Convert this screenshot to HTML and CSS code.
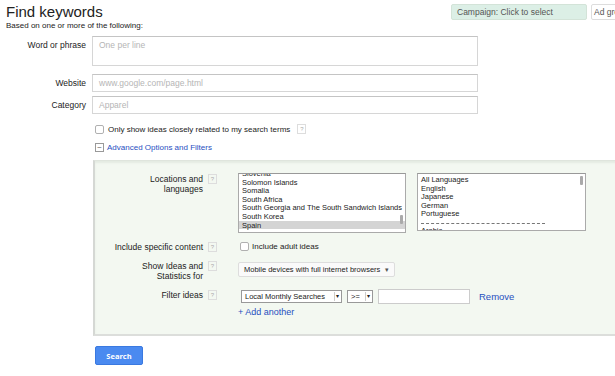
FILE: index.html
```html
<!DOCTYPE html>
<html lang="en">
<head>
  <meta charset="UTF-8">
  <title>Find keywords</title>
  <link rel="stylesheet" href="styles.css">
</head>
<body>
  <div class="page">
    <div class="top">
      <div class="heading">
        <h1>Find keywords</h1>
        <p class="sub">Based on one or more of the following:</p>
      </div>
      <div class="picker">
        <span class="campaign">Campaign: Click to select</span>
        <span class="adgroup">Ad group: Click to select</span>
      </div>
    </div>

    <div class="fields">
      <label class="lbl">Word or phrase</label>
      <div class="box tall">One per line</div>
      <label class="lbl">Website</label>
      <div class="box">www.google.com/page.html</div>
      <label class="lbl">Category</label>
      <div class="box">Apparel</div>
    </div>

    <div class="opt">
      <span class="check"></span>
      <span>Only show ideas closely related to my search terms</span>
      <span class="help">?</span>
    </div>
    <div class="opt adv">
      <span class="minus">&minus;</span>
      <a>Advanced Options and Filters</a>
    </div>

    <div class="panel">
      <div class="row">
        <div class="plabel">Locations and<br>languages</div>
        <div class="hcol"><span class="help">?</span></div>
        <div class="lists">
          <div class="listbox places">
            <ul>
              <li class="cut">Slovenia</li>
              <li>Solomon Islands</li>
              <li>Somalia</li>
              <li>South Africa</li>
              <li>South Georgia and The South Sandwich Islands</li>
              <li>South Korea</li>
              <li class="sel">Spain</li>
            </ul>
            <span class="thumb low"></span>
          </div>
          <div class="listbox langs">
            <ul>
              <li>All Languages</li>
              <li>English</li>
              <li>Japanese</li>
              <li>German</li>
              <li>Portuguese</li>
              <li class="sep"></li>
              <li>Arabic</li>
            </ul>
            <span class="thumb"></span>
          </div>
        </div>
      </div>

      <div class="row">
        <div class="plabel">Include specific content</div>
        <div class="hcol"><span class="help">?</span></div>
        <div class="adult"><span class="check"></span>Include adult ideas</div>
      </div>

      <div class="row">
        <div class="plabel">Show Ideas and<br>Statistics for</div>
        <div class="hcol"><span class="help">?</span></div>
        <div><span class="drop">Mobile devices with full internet browsers <i>&#9662;</i></span></div>
      </div>

      <div class="row">
        <div class="plabel">Filter ideas</div>
        <div class="hcol"><span class="help">?</span></div>
        <div>
          <div class="filter">
            <span class="sel1">Local Monthly Searches <b>&#9662;</b></span>
            <span class="sel2">&gt;= <b>&#9662;</b></span>
            <span class="num"></span>
            <a class="remove">Remove</a>
          </div>
          <a class="add">+ Add another</a>
        </div>
      </div>
    </div>

    <button class="search">Search</button>
  </div>
</body>
</html>
```

FILE: styles.css
```css
body {
  margin: 0;
  font-family: "Liberation Sans", Arial, sans-serif;
  color: #222;
  background: #fff;
  overflow: hidden;
}
.page {
  width: 615px;
  height: 376px;
  overflow: hidden;
}
a {
  color: #1f4fbf;
}
.top {
  display: flex;
  padding: 3px 0 0 6px;
}
.heading {
  flex: 0 0 445px;
}
h1 {
  margin: 0;
  font-size: 15px;
  font-weight: normal;
  line-height: 17px;
}
.sub {
  margin: 1px 0 0;
  font-size: 8px;
  line-height: 10px;
}
.picker {
  display: flex;
  flex-shrink: 0;
  gap: 4px;
  margin-top: 1px;
  white-space: nowrap;
}
.campaign, .adgroup {
  font-size: 8.5px;
  color: #555;
  height: 14px;
  line-height: 14px;
  border: 1px solid #d3e3d8;
  border-radius: 2px;
  padding: 0 5px;
}
.campaign {
  background: #dcefe6;
  width: 124px;
}
.adgroup {
  background: #fff;
  border-color: #ddd;
  padding: 0 2px;
}
.fields {
  display: grid;
  grid-template-columns: 86px 386px;
  column-gap: 6px;
  row-gap: 4px;
  margin-top: 5px;
}
.lbl {
  text-align: right;
  font-size: 8.5px;
  line-height: 18px;
}
.box {
  border: 1px solid #d6d6d6;
  border-top-color: #c4c4c4;
  height: 16px;
  line-height: 16px;
  padding-left: 6px;
  font-size: 8.5px;
  color: #b5b5b5;
}
.box.tall {
  height: 28px;
  margin-bottom: 4px;
}
.opt {
  display: flex;
  align-items: center;
  gap: 4px;
  margin: 9px 0 0 95px;
  font-size: 8px;
  height: 12px;
}
.adv {
  margin-top: 6px;
  gap: 3px;
}
.check {
  display: inline-block;
  width: 7px;
  height: 7px;
  border: 1px solid #b0b0b0;
  border-radius: 2px;
  background: #fff;
}
.minus {
  display: inline-block;
  width: 7px;
  height: 7px;
  border: 1px solid #999;
  font-size: 8px;
  line-height: 7px;
  text-align: center;
  color: #666;
}
.help {
  display: inline-block;
  width: 7px;
  height: 8px;
  border: 1px solid #ddd;
  font-size: 6px;
  line-height: 8px;
  text-align: center;
  color: #aaa;
  margin-left: 3px;
}
.panel {
  margin: 7px 0 0 93px;
  width: 530px;
  height: 161px;
  padding-top: 12px;
  background: #f3f8f1;
  border-top: 1px solid #dfe5dd;
  border-left: 2px solid #d5d8d4;
  border-bottom: 2px solid #dcdedb;
  box-shadow: inset 0 2px 2px #e4ebe2;
}
.row {
  display: grid;
  grid-template-columns: 108px 35px 1fr;
  margin-bottom: 8px;
  font-size: 8.5px;
}
.plabel {
  text-align: right;
  line-height: 10px;
  padding-top: 1px;
}
.hcol .help {
  margin-left: 5px;
}
.lists {
  display: flex;
  gap: 11px;
}
.listbox {
  position: relative;
  height: 58px;
  overflow: hidden;
  background: #fff;
  border: 1px solid #aaa;
  border-top-color: #999;
  font-size: 7.5px;
}
.places {
  width: 166px;
}
.langs {
  width: 167px;
  height: 56px;
}
.listbox ul {
  list-style: none;
  margin: 0;
  padding: 0 0 0 3px;
}
.listbox li {
  height: 8.6px;
  line-height: 9px;
  white-space: nowrap;
}
.listbox li.cut {
  margin-top: -5px;
}
.langs ul {
  padding-top: 1px;
}
.listbox li.sel {
  background: #d4d4d4;
  margin-left: -3px;
  padding-left: 3px;
}
.listbox li.sep {
  height: 5px;
  border-bottom: 1px dashed #777;
  margin: 0 40px 2px 0;
}
.thumb {
  position: absolute;
  right: 2px;
  top: 2px;
  width: 3px;
  height: 9px;
  background: #aaa;
  border-radius: 1px;
}
.thumb.low {
  top: 41px;
}
.adult {
  display: flex;
  align-items: center;
  gap: 3px;
  font-size: 8px;
  padding-left: 2px;
}
.drop {
  display: inline-block;
  margin-top: 2px;
  height: 13px;
  line-height: 13px;
  padding: 0 5px;
  font-size: 7.5px;
  background: #fafafa;
  border: 1px solid #ddd;
  border-radius: 2px;
  white-space: nowrap;
}
.drop i {
  font-style: normal;
  font-size: 7px;
  color: #555;
  margin-left: 3px;
}
.filter {
  display: flex;
  align-items: center;
  gap: 5px;
  margin-left: 3px;
  font-size: 7.5px;
}
.sel1, .sel2 {
  height: 11px;
  line-height: 11px;
  border: 1px solid #999;
  background: #fff;
  padding-left: 3px;
  white-space: nowrap;
}
.sel1 {
  width: 96px;
}
.sel2 {
  width: 21px;
}
.sel1 b, .sel2 b {
  float: right;
  font-weight: normal;
  font-size: 6px;
  border-left: 1px solid #ccc;
  margin: 1px 1px 0 0;
  padding: 0 1px;
  line-height: 9px;
}
.num {
  width: 90px;
  height: 13px;
  border: 1px solid #ccc;
  background: #fff;
}
.remove {
  font-size: 9.5px;
  margin-left: 4px;
}
.add {
  display: inline-block;
  margin-top: 3px;
  font-size: 9px;
}
.search {
  display: block;
  margin: 10px 0 0 95px;
  width: 48px;
  height: 19px;
  padding: 0;
  border: 1px solid #3a79e0;
  border-radius: 2px;
  background: #4a8af0;
  color: #fff;
  font-family: "Open Sans", "Liberation Sans", sans-serif;
  font-weight: bold;
  font-size: 7.5px;
}
```
